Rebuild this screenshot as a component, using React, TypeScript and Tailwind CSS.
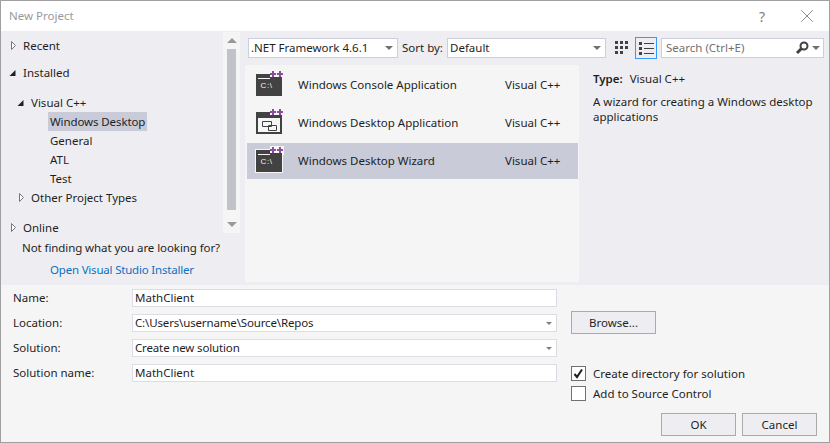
import { X } from "lucide-react";

function Caret({ open }: { open?: boolean }) {
  return (
    <svg width="9" height="9" viewBox="0 0 9 9" className="shrink-0 overflow-visible">
      {open ? (
        <path d="M5.5 2V8H-0.5Z" fill="#222" />
      ) : (
        <path d="M1.5 0.5L5.5 4.5L1.5 8.5Z" fill="#fff" stroke="#777" />
      )}
    </svg>
  );
}

function TreeRow({ label, open, indent, className }: { label: string; open?: boolean; indent: string; className?: string }) {
  return (
    <div className={`flex h-[19px] items-center ${indent} ${className ?? ""}`}>
      <Caret open={open} />
      <span className="ml-[4px]">{label}</span>
    </div>
  );
}

function ProjectIcon({ kind }: { kind: "console" | "window" }) {
  return (
    <svg width="32" height="30" viewBox="0 0 32 30" className="shrink-0">
      {kind === "console" && <path d="M0 3H15V0H29V9H28V27H0Z" fill="#f6f6f6" />}
      <path d="M1 4H15V7H27V26H1Z" fill="#424242" />
      {kind === "console" ? (
        <>
          <path d="M3 8.5H15" stroke="#f6f6f6" />
          <text x="5.5" y="18" fontSize="8" letterSpacing="0.6" fontFamily="'Liberation Sans', sans-serif" fill="#f6f6f6">C:\</text>
        </>
      ) : (
        <>
          <path d="M3 10H25V24H3Z" fill="#f6f6f6" />
          <path d="M7.5 13.5H16.5V18.5H7.5ZM13.5 17.5H21.5V22.5H13.5Z" fill="#f6f6f6" stroke="#424242" />
        </>
      )}
      <path d="M15 4H21M18 1V7M22 4H28M25 1V7" stroke="#8d4b9c" strokeWidth="2" fill="none" />
    </svg>
  );
}

function ProjectRow({ name, kind, selected }: { name: string; kind: "console" | "window"; selected?: boolean }) {
  return (
    <div className={`ml-[2px] mr-[1px] flex h-[38px] items-center border-y border-transparent bg-clip-padding pl-[8px] ${selected ? "bg-[#c9cbd9]" : ""}`}>
      <ProjectIcon kind={kind} />
      <span className="ml-[11px] w-[207px]">{name}</span>
      <span>Visual C++</span>
    </div>
  );
}

function ComboArrow({ small }: { small?: boolean }) {
  return small ? (
    <div className="h-0 w-0 border-x-[3px] border-t-[3px] border-x-transparent border-t-[#808080]" />
  ) : (
    <div className="h-0 w-0 border-x-[4px] border-t-[4px] border-x-transparent border-t-[#717171]" />
  );
}

function Combo({ value, className, small }: { value: string; className: string; small?: boolean }) {
  return (
    <div className={`flex items-center justify-between border bg-white pl-[2px] pr-[4px] ${small ? "border-[#dcdce4]" : "border-[#cccedb]"} ${className}`}>
      <span className={small ? "tracking-[-0.15px]" : ""}>{value}</span>
      <ComboArrow small={small} />
    </div>
  );
}

function FormRow({ label, value, combo }: { label: string; value: string; combo?: boolean }) {
  return (
    <div className="flex h-[18px] items-center">
      <span className="w-[119px]">{label}</span>
      {combo ? (
        <Combo value={value} small className="h-[18px] w-[425px]" />
      ) : (
        <div className="flex h-[18px] w-[425px] items-center border border-[#dcdce4] bg-white pl-[2px]">{value}</div>
      )}
    </div>
  );
}

function DialogButton({ label, className }: { label: string; className: string }) {
  return (
    <div className={`flex h-[23px] items-center justify-center border border-[#aaaaaa] bg-[#eeeef2] ${className}`}>{label}</div>
  );
}

export default function App() {
  return (
    <div className="flex h-[443px] w-[830px] flex-col overflow-hidden whitespace-nowrap border border-[#a0a0a0] bg-[#eeeef2] font-['Noto_Sans','Open_Sans',sans-serif] text-[11.5px] text-[#1e1e1e]">
      <div className="flex h-[30px] shrink-0 items-center justify-between bg-white pl-[8px] pr-[11px]">
        <span className="text-[#999999]">New Project</span>
        <div className="flex items-center gap-[31px] text-[#808080]">
          <span className="text-[14px]">?</span>
          <X size={22} strokeWidth={1} />
        </div>
      </div>

      <div className="flex h-[254px] shrink-0">
        <div className="w-[222px] shrink-0 pt-[5px]">
          <TreeRow label="Recent" indent="pl-[9px]" />
          <TreeRow label="Installed" open indent="pl-[9px]" className="mt-[8px]" />
          <TreeRow label="Visual C++" open indent="pl-[17px]" className="mt-[11px]" />
          <div className="ml-[47px] flex h-[19px] w-[99px] items-center bg-[#c9cbd9] pl-[2px] tracking-[-0.1px]">Windows Desktop</div>
          <div className="flex h-[19px] items-center pl-[49px]">General</div>
          <div className="flex h-[19px] items-center pl-[49px]">ATL</div>
          <div className="flex h-[19px] items-center pl-[49px]">Test</div>
          <TreeRow label="Other Project Types" indent="pl-[17px]" />
          <TreeRow label="Online" indent="pl-[9px]" className="mt-[11px]" />
          <div className="mt-[1px] flex h-[20px] items-center pl-[21px] tracking-[-0.08px]">Not finding what you are looking for?</div>
          <div className="mt-[2px] flex h-[19px] items-center pl-[49px] tracking-[-0.2px] text-[#0e70c0]">Open Visual Studio Installer</div>
        </div>

        <div className="mt-[1px] flex h-[201px] w-[17px] shrink-0 flex-col items-center bg-[#f5f5f5]">
          <div className="mt-[6px] h-0 w-0 border-x-[5px] border-b-[5px] border-x-transparent border-b-[#999999]" />
          <div className="mt-[6px] h-[161px] w-[9px] bg-[#c2c3c9]" />
          <div className="mt-[12px] h-0 w-0 border-x-[5px] border-t-[5px] border-x-transparent border-t-[#999999]" />
        </div>

        <div className="ml-[5px] flex flex-1 flex-col">
          <div className="flex h-[34px] shrink-0 items-center pl-[3px]">
            <Combo value=".NET Framework 4.6.1" className="h-[20px] w-[150px]" />
            <span className="ml-[4px] w-[45px]">Sort by:</span>
            <Combo value="Default" className="h-[20px] w-[159px]" />
            <svg width="18" height="18" viewBox="0 0 18 18" className="ml-[8px]">
              <path d="M1 2h3v3H1zM6 2h3v3H6zM11 2h3v3h-3zM1 7h3v3H1zM6 7h3v3H6zM11 7h3v3h-3zM1 12h3v3H1zM6 12h3v3H6z" fill="#424242" />
            </svg>
            <div className="ml-[3px] flex h-[22px] w-[22px] items-center justify-center border border-[#3399ff]">
              <svg width="15" height="13" viewBox="0 0 15 13">
                <path d="M0 0h3v3H0zM0 5h3v3H0zM0 10h3v3H0zM5 1h10v1H5zM5 6h10v1H5zM5 11h10v1H5z" fill="#424242" />
              </svg>
            </div>
            <div className="ml-[4px] flex h-[20px] w-[163px] items-center justify-between border border-[#cccedb] bg-white pl-[4px] pr-[3px] text-[#717171]">
              <span>Search (Ctrl+E)</span>
              <div className="flex items-center gap-[3px]">
                <svg width="14" height="14" viewBox="0 0 14 14">
                  <circle cx="9" cy="5" r="3.5" fill="none" stroke="#424242" strokeWidth="2" />
                  <path d="M6.5 7.5L2 12" stroke="#424242" strokeWidth="3" />
                </svg>
                <ComboArrow />
              </div>
            </div>
          </div>
          <div className="flex">
            <div className="h-[217px] w-[334px] shrink-0 bg-[#f5f5f5] pt-[1px]">
              <ProjectRow name="Windows Console Application" kind="console" />
              <ProjectRow name="Windows Desktop Application" kind="window" />
              <ProjectRow name="Windows Desktop Wizard" kind="console" selected />
            </div>
            <div className="pl-[14px] pt-[5px]">
              <div className="flex h-[17px] items-center">
                <span className="font-semibold">Type:</span>
                <span className="ml-[7px]">Visual C++</span>
              </div>
              <p className="mt-[7px] w-[225px] whitespace-normal leading-[15px]">A wizard for creating a Windows desktop applications</p>
            </div>
          </div>
        </div>
      </div>

      <div className="mt-auto flex flex-1 flex-col bg-[#f5f5f5] px-[12px] pt-[4px]">
        <div className="flex">
          <div className="flex flex-col gap-[7px]">
            <FormRow label="Name:" value="MathClient" />
            <FormRow label="Location:" value="C:\Users\username\Source\Repos" combo />
            <FormRow label="Solution:" value="Create new solution" combo />
            <FormRow label="Solution name:" value="MathClient" />
          </div>
          <div className="ml-[14px]">
            <DialogButton label="Browse..." className="mt-[22px] w-[85px]" />
            <div className="mt-[32px] flex h-[15px] items-center gap-[7px]">
              <div className="flex h-[15px] w-[15px] items-center justify-center border border-[#717171] bg-white">
                <svg width="11" height="11" viewBox="0 0 11 11">
                  <path d="M1.5 6L4 9L9 1.5" fill="none" stroke="#1e1e1e" strokeWidth="2" />
                </svg>
              </div>
              <span>Create directory for solution</span>
            </div>
            <div className="mt-[5px] flex h-[15px] items-center gap-[7px]">
              <div className="h-[15px] w-[15px] border border-[#717171] bg-white" />
              <span>Add to Source Control</span>
            </div>
          </div>
        </div>
        <div className="mt-[12px] flex justify-end gap-[6px]">
          <DialogButton label="OK" className="w-[75px]" />
          <DialogButton label="Cancel" className="w-[75px]" />
        </div>
      </div>
    </div>
  );
}
